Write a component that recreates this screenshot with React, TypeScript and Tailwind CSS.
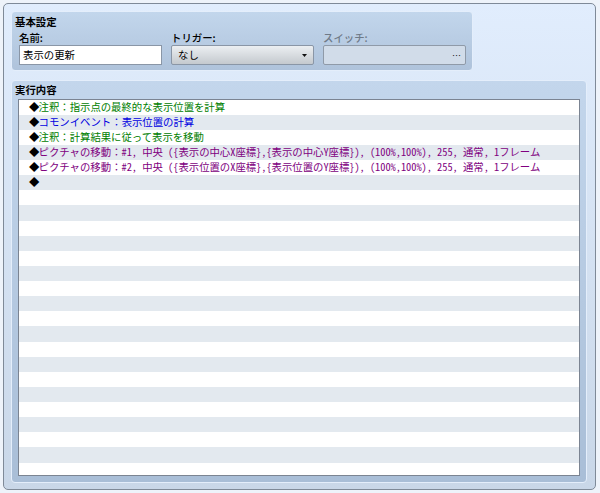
const rows: { head: string; text: string; color: string }[] = [
  { head: "注釈：", text: "指示点の最終的な表示位置を計算", color: "text-[#008000]" },
  { head: "コモンイベント：", text: "表示位置の計算", color: "text-[#0000e0]" },
  { head: "注釈：", text: "計算結果に従って表示を移動", color: "text-[#008000]" },
  {
    head: "ピクチャの移動：",
    text: "#1, 中央 ({表示の中心X座標},{表示の中心Y座標}), (100%,100%), 255, 通常, 1フレーム",
    color: "text-[#800080]",
  },
  {
    head: "ピクチャの移動：",
    text: "#2, 中央 ({表示位置のX座標},{表示位置のY座標}), (100%,100%), 255, 通常, 1フレーム",
    color: "text-[#800080]",
  },
  { head: "", text: "", color: "" },
];

const App = () => {
  const stripes = Array.from({ length: 25 }, (_, i) => rows[i]);

  return (
    <div className="w-[600px] h-[493px] pl-[3px] pr-[4px] pt-[3px] bg-[#eef3fa] font-['Noto_Sans_CJK_JP','Noto_Sans',sans-serif] text-[10.4px] leading-none text-black">
      <div className="h-[487px] flex flex-col gap-[8.5px] pl-[7px] pr-[8px] pt-[7px] pb-[6px] rounded-[5px] border border-[#7f8a98] bg-gradient-to-b from-[#e1edfd] to-[#c9d7e8]">
        <section className="w-[462px] h-[60px] shrink-0 rounded-[4px] border border-[#e4eefb] bg-gradient-to-b from-[#c2d6ec] to-[#afc3db] pl-[3px] pt-[5px]">
          <h2 className="font-bold h-[13px]">基本設定</h2>
          <div className="flex mt-[3px] ml-[4px]">
            <div className="w-[152px]">
              <label className="block h-[12px] font-medium">名前:</label>
              <div className="w-[143px] h-[20px] border border-[#8a96a6] bg-white flex items-center pl-[3px]">
                表示の更新
              </div>
            </div>
            <div className="w-[152px]">
              <label className="block h-[12px] font-medium">トリガー:</label>
              <div className="w-[143px] h-[20px] rounded-[2px] border border-[#8a96a6] bg-gradient-to-b from-[#eceff2] to-[#c4c9ce] flex items-center justify-between pl-[6px] pr-[6px]">
                <span>なし</span>
                <svg width="5" height="3" viewBox="0 0 5 3">
                  <path d="M0 0h5L2.5 3z" fill="#111" />
                </svg>
              </div>
            </div>
            <div className="w-[143px]">
              <label className="block h-[12px] text-[#6f7a88] font-medium">スイッチ:</label>
              <div className="h-[20px] rounded-[2px] border border-[#8f9aa8] bg-[#d1dce9] flex items-center justify-end pr-[4px] text-[#111] text-[9px]">
                <span>…</span>
              </div>
            </div>
          </div>
        </section>

        <section className="flex-1 min-h-0 rounded-[4px] border border-[#e4eefb] bg-gradient-to-b from-[#c3d6ec] to-[#a9bed7] px-[6px] pt-[4px] pb-[6px] flex flex-col">
          <h2 className="font-bold h-[14px] shrink-0 -ml-[3px]">実行内容</h2>
          <div className="flex-1 min-h-0 overflow-hidden border border-[#7b8492] bg-white">
            {stripes.map((row, i) => (
              <div
                key={i}
                className={`h-[15.13px] flex items-center pl-[10px] whitespace-nowrap ${
                  i % 2 === 1 ? "bg-[#e3e9ef]" : "bg-white"
                }`}
              >
                {row && (
                  <>
                    <span className="w-[9.5px] shrink-0">◆</span>
                    <span className={row.color}>
                      {row.head}
                      <span className="tracking-[-0.03px] [font-feature-settings:'hwid']">{row.text}</span>
                    </span>
                  </>
                )}
              </div>
            ))}
          </div>
        </section>
      </div>
    </div>
  );
};

export default App;
